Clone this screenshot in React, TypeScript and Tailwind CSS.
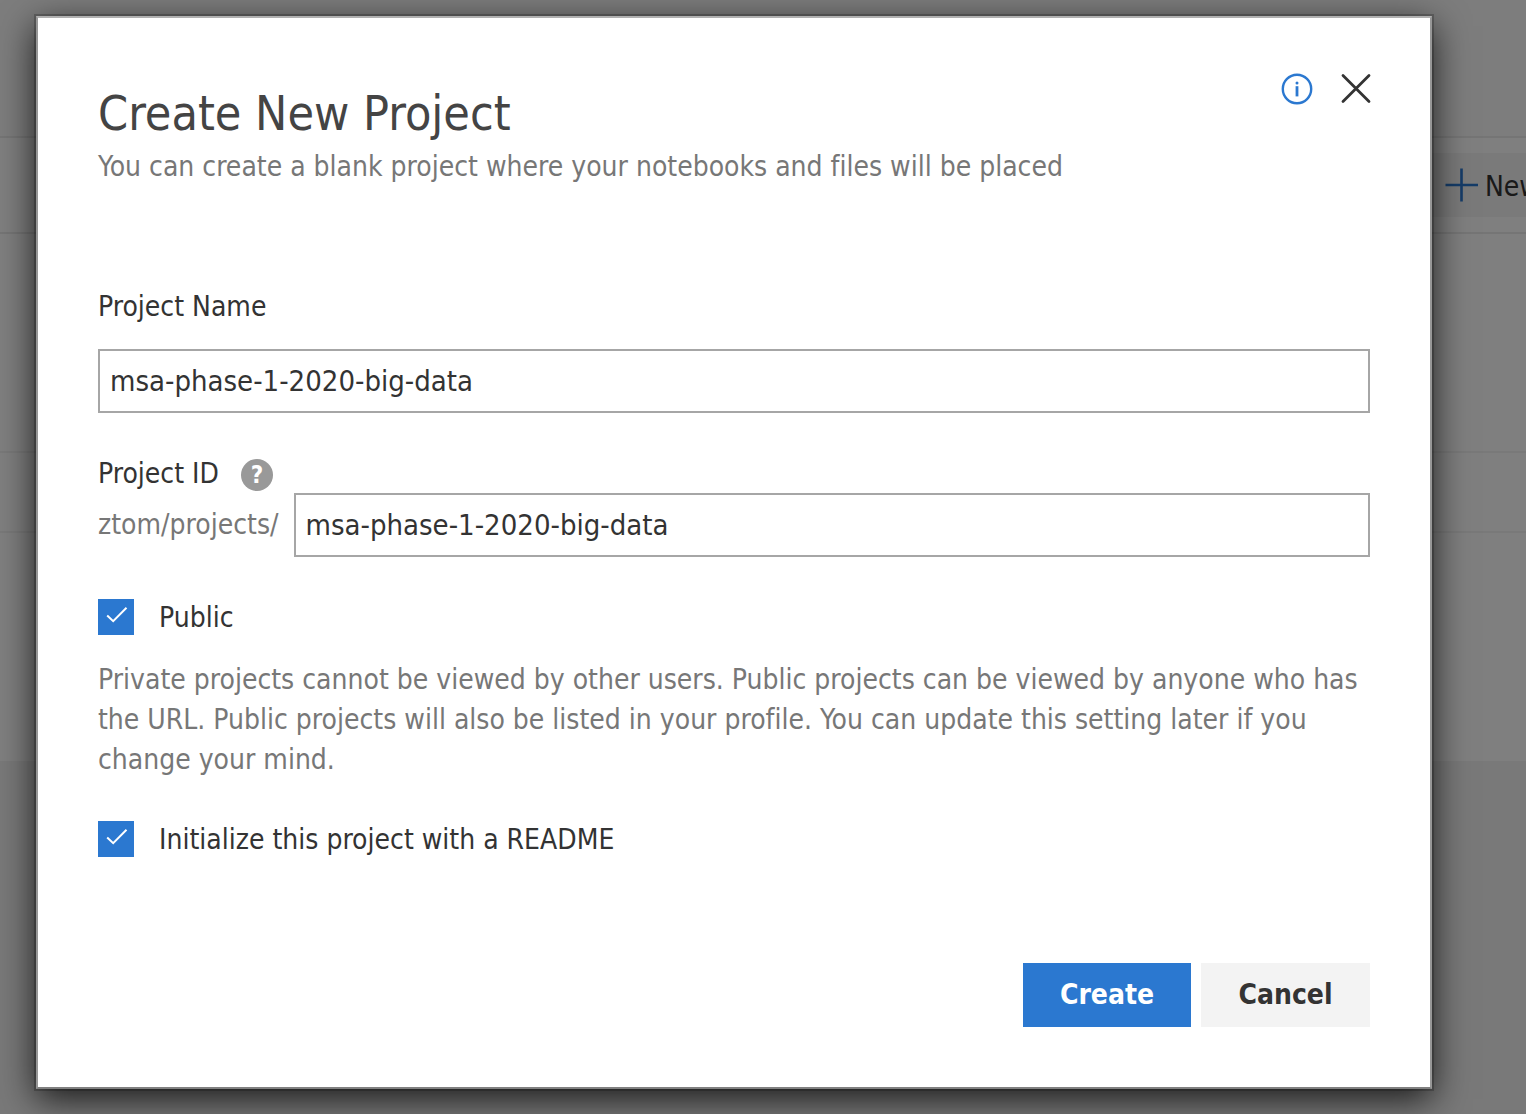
import { useState } from "react";

function CheckBox({
  id,
  label,
  checked,
  onChange,
}: {
  id: string;
  label: string;
  checked: boolean;
  onChange: (value: boolean) => void;
}) {
  return (
    <div className="flex items-center gap-[25px]">
      <span className="relative size-9 shrink-0">
        <input
          id={id}
          type="checkbox"
          checked={checked}
          onChange={(e) => onChange(e.target.checked)}
          className="block size-9 appearance-none border-2 border-[#a6a6a6] bg-white checked:border-[#2b78d0] checked:bg-[#2b78d0]"
        />
        {checked && (
          <svg
            viewBox="0 0 36 36"
            className="pointer-events-none absolute inset-0 size-9"
            fill="none"
            stroke="#fff"
            strokeWidth="2"
            aria-hidden="true"
          >
            <path d="M9.2 16.5 L15.2 22.2 L28.5 8.8" />
          </svg>
        )}
      </span>
      <label htmlFor={id} className="pt-0.5 leading-[34px]">
        {label}
      </label>
    </div>
  );
}

function BackgroundPage() {
  return (
    <div className="flex min-h-screen flex-col bg-[#f2f2f2]" aria-hidden="true">
      <div className="h-[136px] bg-[#fafafa]" />
      <div className="flex h-[98px] items-center justify-end overflow-hidden border-y-2 border-[#eaeaea] bg-white">
        <div className="-mr-24 flex h-16 w-[190px] shrink-0 items-center gap-1.5 bg-[#f4f4f4] pl-[13px]">
          <svg viewBox="0 0 34 34" className="size-[34px] shrink-0" stroke="#2b78d0" strokeWidth="2.6">
            <path d="M0.5 17 H33 M16.5 0.5 V33.5" />
          </svg>
          <span className="pt-1 whitespace-nowrap">New Project</span>
        </div>
      </div>
      <div className="h-[219px] border-b-2 border-[#f2f2f2] bg-white" />
      <div className="h-20 border-b-2 border-[#f2f2f2] bg-white" />
      <div className="h-[228px] bg-white" />
    </div>
  );
}

export default function App() {
  const [name, setName] = useState("msa-phase-1-2020-big-data");
  const [projectId, setProjectId] = useState("msa-phase-1-2020-big-data");
  const [isPublic, setIsPublic] = useState(true);
  const [readme, setReadme] = useState(true);

  return (
    <div className="relative overflow-hidden font-['DejaVu_Sans_Condensed','DejaVu_Sans',sans-serif] text-[28px] text-[#333] [font-variant-ligatures:none]">
      <BackgroundPage />
      <div className="absolute inset-0 bg-black/50 pt-4 pr-[94px] pl-9">
        <div
          role="dialog"
          aria-labelledby="dialog-title"
          className="border-2 border-x-[#979797] border-t-[#b0b0b0] border-b-[#808080] bg-white px-[60px] pt-[55px] pb-[60px] shadow-[0_0_0_2px_rgba(0,0,0,0.2),0_10px_34px_rgba(0,0,0,0.8)]"
        >
          <header className="flex items-start justify-between">
            <div className="pt-2.5">
              <h1 id="dialog-title" className="text-[48px] leading-[60px] text-[#444]">
                Create New Project
              </h1>
              <p className="leading-[48px] text-[#777]">
                You can create a blank project where your notebooks and files will be placed
              </p>
            </div>
            <div className="flex shrink-0 items-center gap-[29px]">
              <button type="button" aria-label="Information">
                <svg viewBox="0 0 32 32" className="size-8" fill="none" aria-hidden="true">
                  <circle cx="16" cy="16" r="14.2" stroke="#2b78d0" strokeWidth="2.4" />
                  <path d="M16 13.2V23.4" stroke="#2b78d0" strokeWidth="2.8" />
                  <circle cx="16" cy="10" r="1.5" fill="#2b78d0" />
                </svg>
              </button>
              <button type="button" aria-label="Close">
                <svg viewBox="0 0 28 28" className="size-7 overflow-visible" fill="none" aria-hidden="true">
                  <path
                    d="M1 0.5 L27 26.5 M27 0.5 L1 26.5"
                    stroke="#333"
                    strokeWidth="2.8"
                    strokeLinecap="round"
                  />
                </svg>
              </button>
            </div>
          </header>

          <form className="pt-[98px]" onSubmit={(e) => e.preventDefault()}>
            <label htmlFor="project-name" className="block leading-9">
              Project Name
            </label>
            <input
              id="project-name"
              type="text"
              value={name}
              onChange={(e) => setName(e.target.value)}
              className="mt-6 block h-16 w-full border-2 border-[#a6a6a6] bg-white px-2.5 text-[29px]"
            />

            <div className="mt-[42px] flex h-[38px] items-center gap-[22px]">
              <label htmlFor="project-id">Project ID</label>
              <button
                type="button"
                aria-label="Help"
                className="mt-0.5 size-8 rounded-full bg-[#999] text-center text-[24px] leading-8 font-bold text-white"
              >
                ?
              </button>
            </div>
            <div className="flex items-center gap-[15px]">
              <span className="text-[#777]">ztom/projects/</span>
              <input
                id="project-id"
                type="text"
                value={projectId}
                onChange={(e) => setProjectId(e.target.value)}
                className="block h-16 min-w-0 flex-1 border-2 border-[#a6a6a6] bg-white px-2.5 text-[29px]"
              />
            </div>

            <div className="mt-[42px]">
              <CheckBox id="public" label="Public" checked={isPublic} onChange={setIsPublic} />
            </div>
            <p className="mt-[25px] leading-10 text-[#777]">
              Private projects cannot be viewed by other users. Public projects can be viewed by anyone who has the URL.
              Public projects will also be listed in your profile. You can update this setting later if you change your
              mind.
            </p>
            <div className="mt-[41px]">
              <CheckBox
                id="readme"
                label="Initialize this project with a README"
                checked={readme}
                onChange={setReadme}
              />
            </div>

            <div className="mt-[106px] flex justify-end gap-2.5 font-bold">
              <button type="submit" className="h-16 w-[168px] bg-[#2b78d0] text-white">
                Create
              </button>
              <button type="button" className="h-16 w-[169px] bg-[#f3f3f3]">
                Cancel
              </button>
            </div>
          </form>
        </div>
      </div>
    </div>
  );
}
